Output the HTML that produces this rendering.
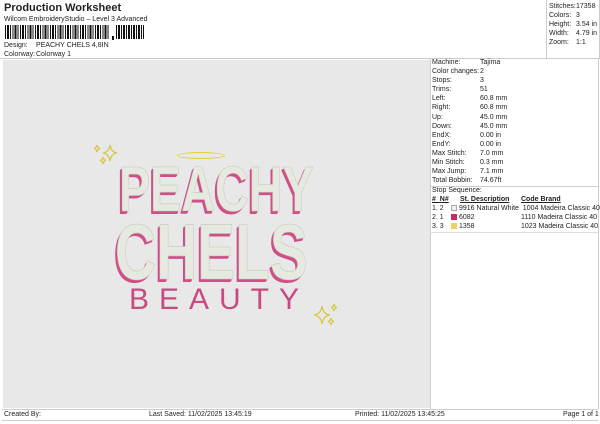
<!DOCTYPE html>
<html><head><style>
body{margin:0;width:600px;height:424px;background:#fff;font-family:"Liberation Sans",sans-serif;position:relative;overflow:hidden;color:#222}
.a{position:absolute;white-space:nowrap;font-size:7px;line-height:9px}
.r{position:absolute;left:432px;font-size:7px;line-height:9.1px}
.r div{height:9.1px;white-space:nowrap}
.r span{display:inline-block;width:48px}
.big{position:absolute;white-space:nowrap;font-weight:bold;color:#e6e9e0;-webkit-text-stroke:0.6px #c4c8bd;text-shadow:-2px 2px 0 #cf4f86,-3px 3px 0 #cf4f86;transform-origin:left top}
</style></head><body>
<div class="a" style="left:4px;top:2px;font-size:11px;font-weight:bold;line-height:13px">Production Worksheet</div>
<div class="a" style="left:4px;top:15px">Wilcom EmbroideryStudio – Level 3 Advanced</div>
<div style="position:absolute;left:5px;top:25px;width:105px;height:14px;background:repeating-linear-gradient(90deg,#111 0 1px,#fff 1px 2px,#111 2px 4px,#fff 4px 5px,#111 5px 6px,#fff 6px 7.5px)"></div>
<div style="position:absolute;left:112px;top:36px;width:2px;height:4px;background:#111"></div>
<div style="position:absolute;left:116px;top:25px;width:28px;height:14px;background:repeating-linear-gradient(90deg,#111 0 1px,#fff 1px 2px,#111 2px 4px,#fff 4px 5px)"></div>
<div class="a" style="left:4px;top:41px">Design:</div><div class="a" style="left:36px;top:41px">PEACHY CHELS 4,8IN</div>
<div class="a" style="left:4px;top:50px">Colorway:</div><div class="a" style="left:36px;top:50px">Colorway 1</div>
<div style="position:absolute;left:546px;top:0;width:52px;height:58px;border-left:1px solid #ccc;border-right:1px solid #ccc"></div>
<div class="r" style="left:549px;top:2px"><div><span style="width:27px">Stitches:</span>17358</div><div><span style="width:27px">Colors:</span>3</div><div><span style="width:27px">Height:</span>3.54 in</div><div><span style="width:27px">Width:</span>4.79 in</div><div><span style="width:27px">Zoom:</span>1:1</div></div>
<div style="position:absolute;left:0;top:58px;width:600px;height:1px;background:#ccc"></div>
<div style="position:absolute;left:3px;top:60px;width:427px;height:348px;background:#e8e8e8"></div>
<div style="position:absolute;left:430px;top:59px;width:1px;height:350px;background:#ccc"></div>
<div style="position:absolute;left:598px;top:59px;width:1px;height:350px;background:#ccc"></div>
<div class="r" style="top:58px">
<div><span>Machine:</span>Tajima</div><div><span>Color changes:</span>2</div><div><span>Stops:</span>3</div><div><span>Trims:</span>51</div><div><span>Left:</span>60.8 mm</div><div><span>Right:</span>60.8 mm</div><div><span>Up:</span>45.0 mm</div><div><span>Down:</span>45.0 mm</div><div><span>EndX:</span>0.00 in</div><div><span>EndY:</span>0.00 in</div><div><span>Max Stitch:</span>7.0 mm</div><div><span>Min Stitch:</span>0.3 mm</div><div><span>Max Jump:</span>7.1 mm</div><div><span>Total Bobbin:</span>74.67ft</div>
</div>
<div style="position:absolute;left:430px;top:186px;width:168px;height:1px;background:#ccc"></div>
<div class="a" style="left:432px;top:186px">Stop Sequence:</div>
<div class="a" style="left:432px;top:195px;font-weight:bold;text-decoration:underline">#&nbsp;&nbsp;N#</div>
<div class="a" style="left:460px;top:195px;font-weight:bold;text-decoration:underline">St. Description</div>
<div class="a" style="left:521px;top:195px;font-weight:bold;text-decoration:underline">Code Brand</div>
<div class="a" style="left:432px;top:204px">1.&nbsp;2</div><div style="position:absolute;left:451px;top:205px;width:6px;height:6px;background:#eee;border:1px solid #aaa;box-sizing:border-box"></div><div class="a" style="left:459px;top:204px">9916 Natural White&nbsp; 1004 Madeira Classic 40</div>
<div class="a" style="left:432px;top:213px">2.&nbsp;1</div><div style="position:absolute;left:451px;top:214px;width:6px;height:6px;background:#c42a6a"></div><div class="a" style="left:459px;top:213px">6082</div><div class="a" style="left:521px;top:213px">1110 Madeira Classic 40</div>
<div class="a" style="left:432px;top:222px">3.&nbsp;3</div><div style="position:absolute;left:451px;top:223px;width:6px;height:6px;background:#f0d060"></div><div class="a" style="left:459px;top:222px">1358</div><div class="a" style="left:521px;top:222px">1023 Madeira Classic 40</div>
<div style="position:absolute;left:430px;top:232px;width:168px;height:1px;background:#ddd"></div>
<!-- design -->
<div style="position:absolute;left:177px;top:152px;width:48px;height:7px;border:1.5px solid #e3cf3c;border-radius:50%;box-sizing:border-box"></div>
<div class="big" style="left:119px;top:157px;font-size:64px;line-height:64px;transform:scaleX(0.73)">PEACHY</div>
<div class="big" style="left:115px;top:212px;font-size:79px;line-height:79px;transform:scaleX(0.72)">CHELS</div>
<div style="position:absolute;left:114px;top:285px;width:200px;text-align:center;font-size:30px;line-height:30px;color:#c84a80;letter-spacing:10px;padding-left:10px;box-sizing:border-box">BEAUTY</div>
<svg style="position:absolute;left:90px;top:142px" width="30" height="30" viewBox="0 0 30 30" fill="none" stroke="#d8c84a" stroke-width="1.3"><path d="M20 3 Q21 10 27 11 Q21 12 20 19 Q19 12 13 11 Q19 10 20 3Z"/><path d="M7 3 Q7.5 6 10 6.5 Q7.5 7 7 10 Q6.5 7 4 6.5 Q6.5 6 7 3Z"/><path d="M13 15 Q13.5 18 16 18.5 Q13.5 19 13 22 Q12.5 19 10 18.5 Q12.5 18 13 15Z"/></svg>
<svg style="position:absolute;left:310px;top:300px" width="30" height="30" viewBox="0 0 30 30" fill="none" stroke="#d8c84a" stroke-width="1.3"><path d="M12 6 Q13 14 20 15 Q13 16 12 24 Q11 16 4 15 Q11 14 12 6Z"/><path d="M24 4 Q24.5 7 27 7.5 Q24.5 8 24 11 Q23.5 8 21 7.5 Q23.5 7 24 4Z"/><path d="M21 18 Q21.5 21 24 21.5 Q21.5 22 21 25 Q20.5 22 18 21.5 Q20.5 21 21 18Z"/></svg>
<!-- footer -->
<div style="position:absolute;left:2px;top:409px;width:596px;height:10px;border-top:1px solid #ccc;border-bottom:1px solid #ccc"></div>
<div class="a" style="left:4px;top:410px">Created By:</div>
<div class="a" style="left:149px;top:410px">Last Saved: 11/02/2025 13:45:19</div>
<div class="a" style="left:355px;top:410px">Printed: 11/02/2025 13:45:25</div>
<div class="a" style="left:563px;top:410px">Page 1 of 1</div>
</body></html>
